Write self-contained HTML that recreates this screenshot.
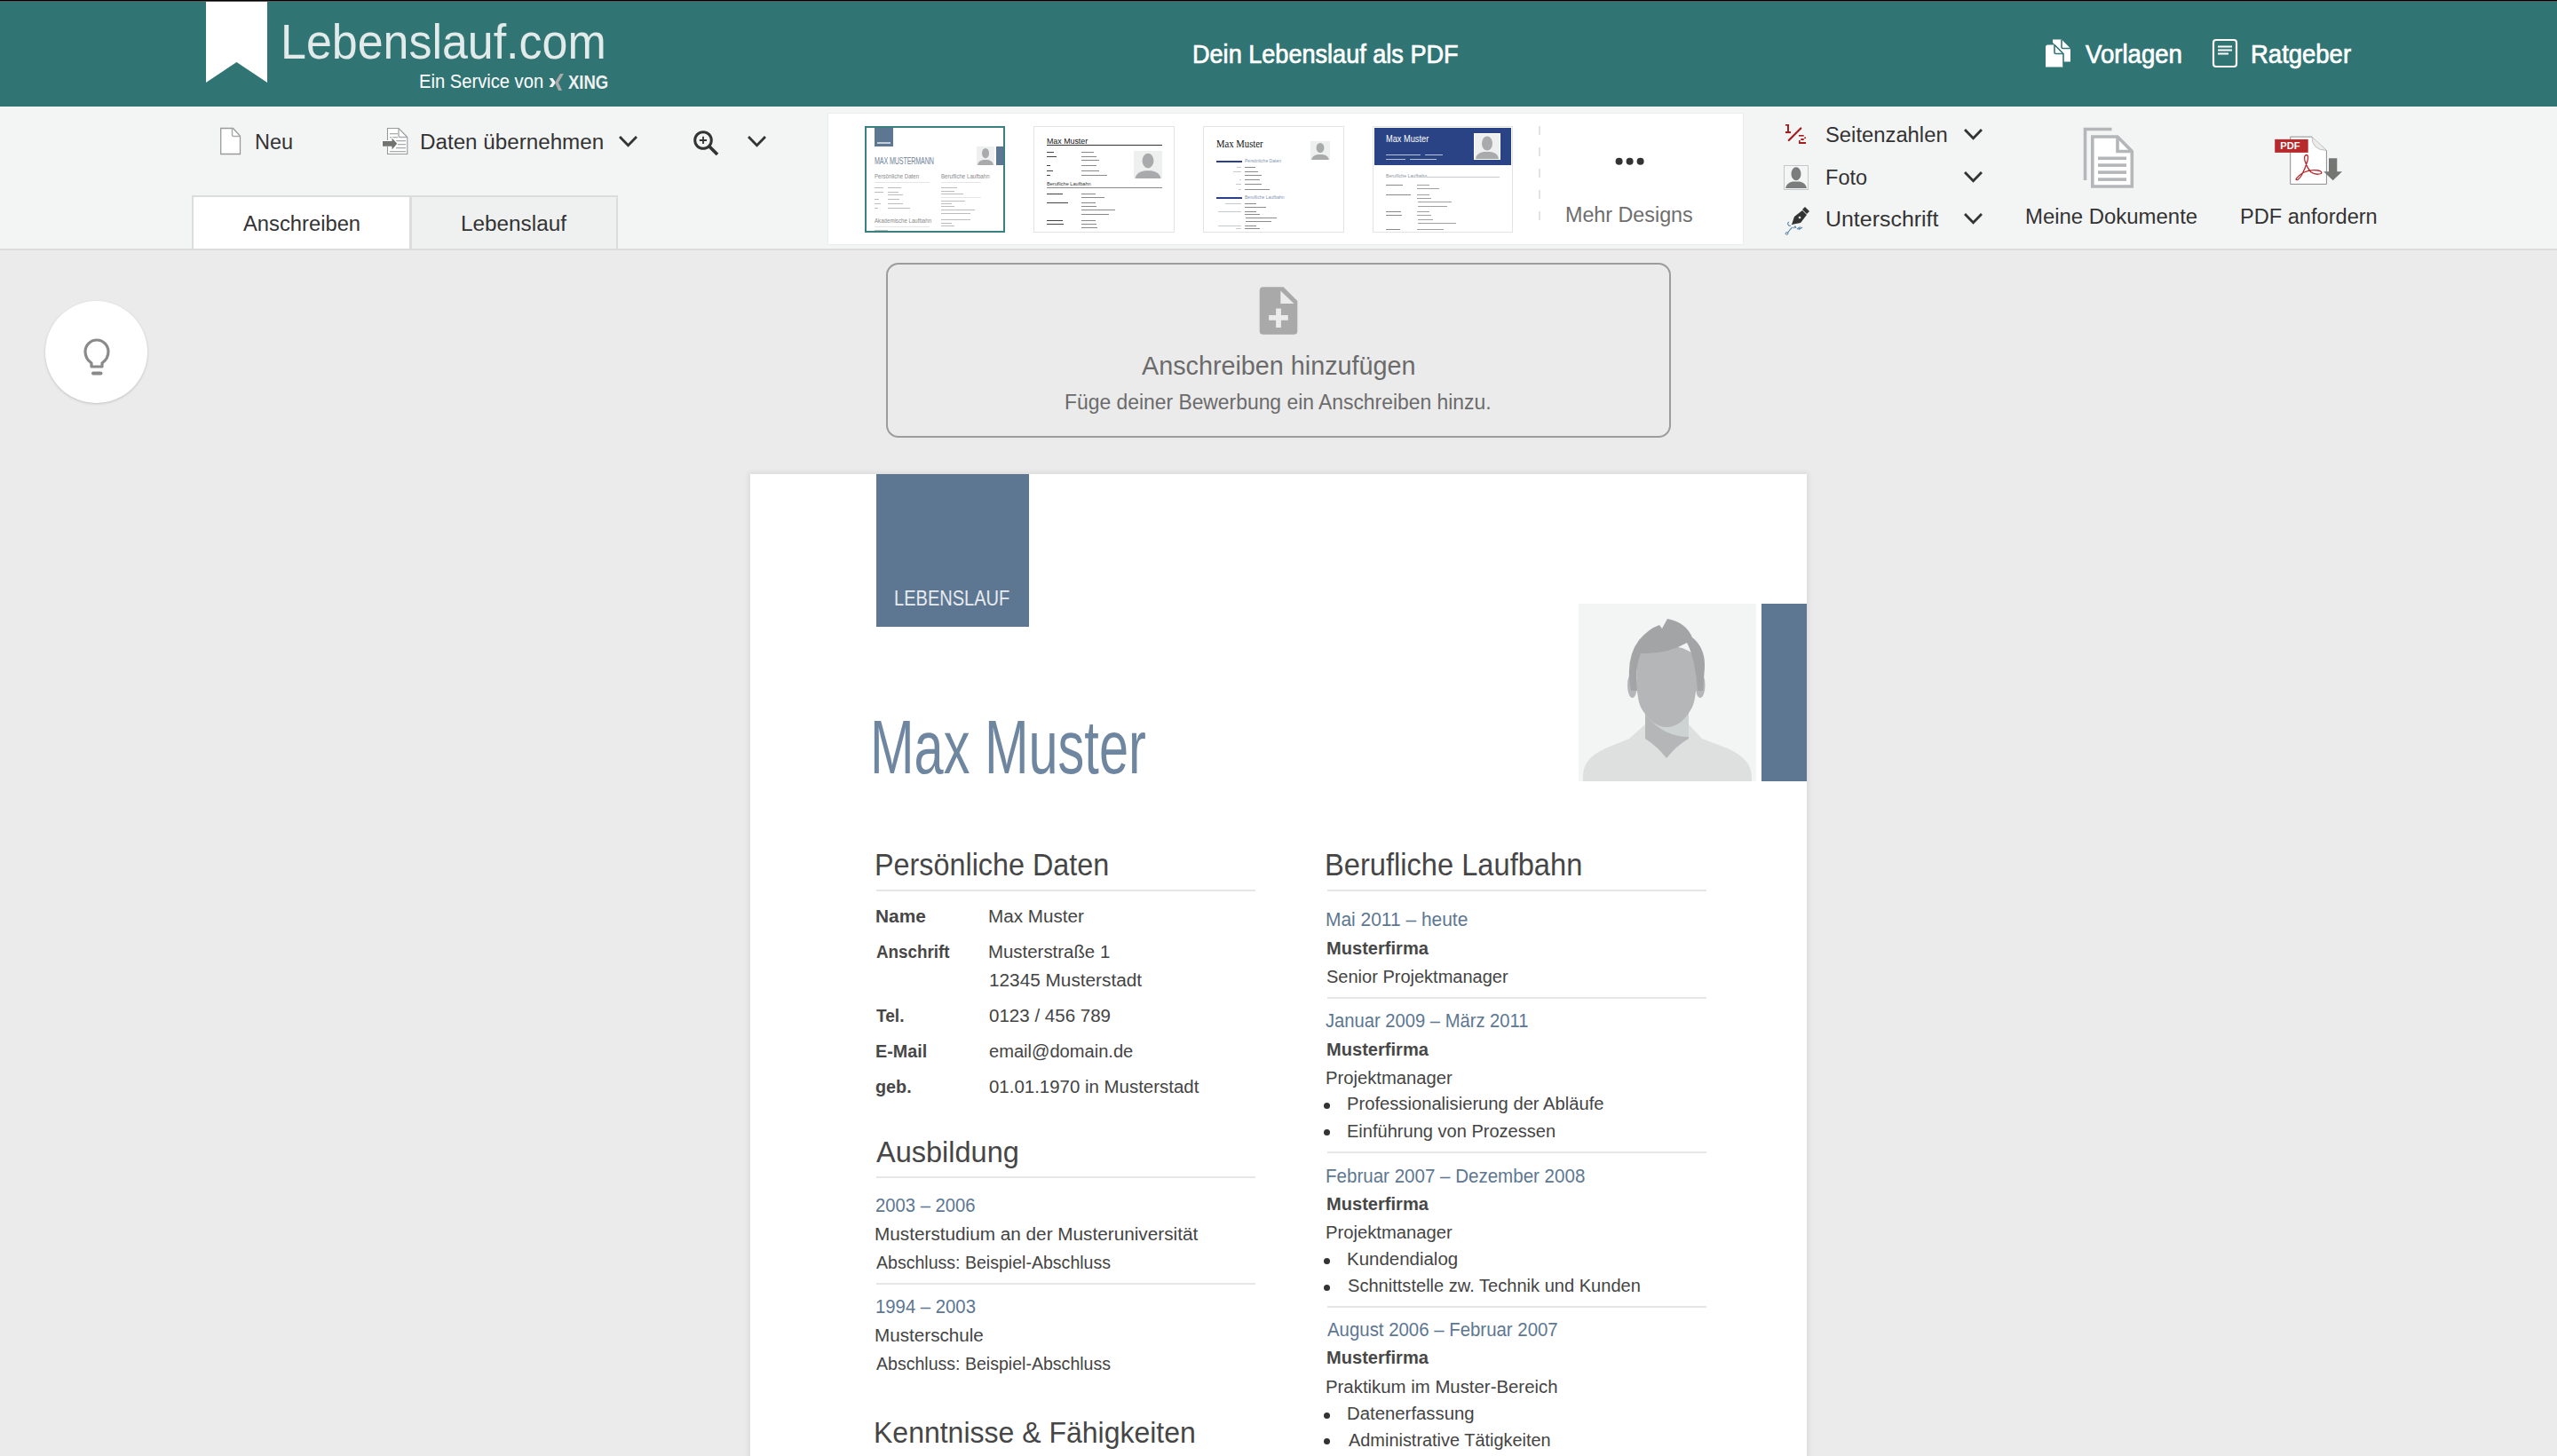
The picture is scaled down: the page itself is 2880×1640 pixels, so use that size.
<!DOCTYPE html>
<html><head><meta charset="utf-8"><style>
html,body{margin:0;padding:0;width:2880px;height:1640px;overflow:hidden;background:#ebebeb;}
.r{position:absolute;display:block;}
.t{position:absolute;white-space:nowrap;line-height:1;transform-origin:0 0;font-family:"Liberation Sans",sans-serif;}
</style></head><body>
<div class="r" style="left:0px;top:0px;width:2880px;height:1640px;background:#ebebeb;"></div>
<div class="r" style="left:0px;top:0px;width:2880px;height:120px;background:#317474;"></div>
<div class="r" style="left:0px;top:0px;width:2880px;height:1px;background:#000;"></div>
<div class="r" style="left:0px;top:1px;width:2880px;height:1px;background:#5a5a58;"></div>
<svg class="r" style="left:232px;top:2px;" width="69" height="91" viewBox="0 0 69 91"><polygon points="0,0 69,0 69,91 34.5,68 0,91" fill="#fff"/></svg>
<svg class="r" style="left:616px;top:82px;" width="22" height="22" viewBox="0 0 22 22"><path d="M2.5,6 L6.5,6 L10,11 L6.5,16 L2.5,16 L6,11 Z" fill="#f2f2f2"/><path d="M15,1 L19,1 L13,11 L17,20 L13,20 L9,11 Z" fill="#a9a9a9"/></svg>
<svg class="r" style="left:2302px;top:42px;" width="32" height="36" viewBox="0 0 32 36"><path d="M10,2.5 L20,2.5 L30,12.5 L30,27.5 L20,27.5 L20,16 L10,6 Z" fill="#fff"/><path d="M20,2.5 L20,11 Q20,12.5 21.5,12.5 L30,12.5" fill="none" stroke="#317474" stroke-width="1.6"/><path d="M2,11 Q2,8.5 4.5,8.5 L12,8.5 L22,18.5 L22,33.5 L2,33.5 Z" fill="#fff"/><path d="M12,8.5 L12,17 Q12,18.5 13.5,18.5 L22,18.5" fill="none" stroke="#317474" stroke-width="1.6"/><path d="M12,8.5 L22,18.5 L22,33.5" fill="none" stroke="#317474" stroke-width="1.6"/></svg>
<svg class="r" style="left:2490px;top:42px;" width="32" height="36" viewBox="0 0 32 36"><rect x="3" y="3" width="26" height="30" rx="3" ry="3" fill="none" stroke="#fff" stroke-width="2.2"/><rect x="8" y="9.5" width="16" height="2" fill="#fff"/><rect x="8" y="13.5" width="16" height="2" fill="#fff"/><rect x="8" y="17.5" width="12" height="2" fill="#fff"/></svg>
<div class="r" style="left:0px;top:120px;width:2880px;height:160px;background:#f3f5f5;"></div>
<div class="r" style="left:0px;top:280px;width:2880px;height:2px;background:#dcdcdc;"></div>
<div class="r" style="left:216px;top:220px;width:247px;height:60px;background:#ffffff;border:2px solid #dcdcdc;border-bottom:none;box-sizing:border-box;"></div>
<div class="r" style="left:462px;top:220px;width:234px;height:60px;background:#eff0f0;border:2px solid #dcdcdc;border-bottom:none;box-sizing:border-box;"></div>
<svg class="r" style="left:246px;top:142px;" width="28" height="34" viewBox="0 0 28 34"><path d="M2.7,2.5 L16.5,2.5 L24.5,11.2 L24.5,31.5 L2.7,31.5 Z" fill="#fff" stroke="#9a9a9a" stroke-width="1.3"/><path d="M15.5,2.5 L15.5,10 Q15.5,11.5 17,11.5 L24.5,11.5" fill="none" stroke="#a8acae" stroke-width="1.5"/></svg>
<svg class="r" style="left:428px;top:142px;" width="34" height="34" viewBox="0 0 34 34"><path d="M8.5,2.5 L21,2.5 L30.8,12.5 L30.8,31.5 L8.5,31.5 Z" fill="#fff" stroke="#999" stroke-width="1.1"/><path d="M21,2.5 L21,11 Q21,12.5 22.5,12.5 L30.8,12.5" fill="none" stroke="#a8acae" stroke-width="1.4"/><g fill="#a9acae"><rect x="11" y="8" width="9" height="1.3"/><rect x="11" y="12" width="9" height="1.3"/><rect x="18" y="16" width="11" height="1.3"/><rect x="20" y="20" width="9" height="1.3"/><rect x="18" y="24" width="11" height="1.3"/><rect x="11" y="28" width="18" height="1.3"/></g><path d="M1,16 L13,16 L13,11.5 L21,19.5 L13,27.5 L13,23 L1,23 Z" fill="#fff"/><path d="M3,17 L13.5,17 L13.5,13.4 L19.3,19.8 L13.5,26.5 L13.5,22.7 L3,22.7 Z" fill="#727472"/></svg>
<svg class="r" style="left:696.0px;top:151.5px;" width="23" height="14.8" viewBox="0 0 23 14.8"><polyline points="3,3 11.5,11.8 20,3" fill="none" stroke="#333" stroke-width="2.8" stroke-linecap="square" stroke-linejoin="miter"/></svg>
<svg class="r" style="left:776px;top:140px;" width="40" height="40" viewBox="0 0 40 40"><circle cx="16" cy="18" r="9.3" fill="none" stroke="#333" stroke-width="3"/><path d="M16,13.8 L16,22 M11.8,18 L20,18" stroke="#333" stroke-width="1.8"/><path d="M23,25 L32,34" stroke="#333" stroke-width="3.8"/></svg>
<svg class="r" style="left:840.5px;top:152px;" width="23" height="14.8" viewBox="0 0 23 14.8"><polyline points="3,3 11.5,11.8 20,3" fill="none" stroke="#333" stroke-width="2.8" stroke-linecap="square" stroke-linejoin="miter"/></svg>
<div class="r" style="left:933px;top:128px;width:1030px;height:147px;background:#ffffff;box-shadow:0 0 0 1px #eceeee;"></div>
<div class="r" style="left:974px;top:142px;width:158px;height:120px;background:#fff;border:2px solid #3b8080;box-sizing:border-box;"></div>
<div class="r" style="left:985px;top:144px;width:21px;height:21px;background:#5d7792;"></div>
<div class="r" style="left:988px;top:160px;width:15px;height:1.5px;background:#c5cfdb;"></div>
<div class="t" style="left:985px;top:176px;font-size:11.5px;color:#6f8399;transform:scaleX(0.62);letter-spacing:-0.2px">MAX MUSTERMANN</div>
<svg class="r" style="left:1100px;top:165px;" width="20" height="21" viewBox="0 0 20 21"><rect width="20" height="21" fill="#eef0f0"/><ellipse cx="10.0" cy="7.56" rx="4.0" ry="5.67" fill="#a9aaab"/><path d="M1.0,21 Q1.6,16.38 7.6,15.12 L12.4,15.12 Q18.400000000000002,16.38 19.0,21 Z" fill="#a9aaab"/></svg>
<div class="r" style="left:1122px;top:165px;width:8px;height:21px;background:#5d7792;"></div>
<div class="t" style="left:985px;top:195.5px;font-size:6.6px;color:#8a8a8a;transform:scaleX(0.93)">Persönliche Daten</div>
<div class="t" style="left:1060px;top:195.5px;font-size:6.6px;color:#8a8a8a;transform:scaleX(0.93)">Berufliche Laufbahn</div>
<div class="t" style="left:985px;top:245.5px;font-size:6.6px;color:#8a8a8a;transform:scaleX(0.93)">Akademische Laufbahn</div>
<div class="r" style="left:985px;top:205px;width:62px;height:1px;background:#e6e6e6;"></div><div class="r" style="left:1060px;top:205px;width:45px;height:1px;background:#e6e6e6;"></div><div class="r" style="left:1060px;top:221.5px;width:45px;height:1.0px;background:#e6e6e6;"></div><div class="r" style="left:985px;top:255px;width:62px;height:1px;background:#e6e6e6;"></div>
<div class="r" style="left:985px;top:211px;width:10px;height:1.3000000000000114px;background:#bdbdbd;"></div><div class="r" style="left:1000px;top:211px;width:15px;height:1.3000000000000114px;background:#bdbdbd;"></div><div class="r" style="left:985px;top:216px;width:10px;height:1.3000000000000114px;background:#bdbdbd;"></div><div class="r" style="left:1000px;top:216px;width:12px;height:1.3000000000000114px;background:#bdbdbd;"></div><div class="r" style="left:1000px;top:219px;width:17px;height:1.3000000000000114px;background:#bdbdbd;"></div><div class="r" style="left:985px;top:224px;width:5px;height:1.3000000000000114px;background:#bdbdbd;"></div><div class="r" style="left:1000px;top:224px;width:13px;height:1.3000000000000114px;background:#bdbdbd;"></div><div class="r" style="left:985px;top:229px;width:7px;height:1.3000000000000114px;background:#bdbdbd;"></div><div class="r" style="left:1000px;top:229px;width:17px;height:1.3000000000000114px;background:#bdbdbd;"></div><div class="r" style="left:985px;top:234px;width:4px;height:1.3000000000000114px;background:#bdbdbd;"></div><div class="r" style="left:1000px;top:234px;width:25px;height:1.3000000000000114px;background:#bdbdbd;"></div><div class="r" style="left:1060px;top:211px;width:18px;height:1.3000000000000114px;background:#bdbdbd;"></div><div class="r" style="left:1060px;top:214.5px;width:15px;height:1.3000000000000114px;background:#bdbdbd;"></div><div class="r" style="left:1060px;top:218px;width:25px;height:1.3000000000000114px;background:#bdbdbd;"></div><div class="r" style="left:1060px;top:226px;width:27px;height:1.3000000000000114px;background:#bdbdbd;"></div><div class="r" style="left:1060px;top:229px;width:12px;height:1.3000000000000114px;background:#bdbdbd;"></div><div class="r" style="left:1060px;top:232px;width:15px;height:1.3000000000000114px;background:#bdbdbd;"></div><div class="r" style="left:1060px;top:236px;width:38px;height:1.3000000000000114px;background:#bdbdbd;"></div><div class="r" style="left:1060px;top:239.5px;width:33px;height:1.3000000000000114px;background:#bdbdbd;"></div><div class="r" style="left:1060px;top:247px;width:33px;height:1.3000000000000114px;background:#bdbdbd;"></div><div class="r" style="left:1060px;top:250.5px;width:12px;height:1.3000000000000114px;background:#bdbdbd;"></div><div class="r" style="left:1060px;top:254px;width:15px;height:1.3000000000000114px;background:#bdbdbd;"></div><div class="r" style="left:985px;top:259px;width:15px;height:1.3000000000000114px;background:#bdbdbd;"></div>
<div class="r" style="left:1164px;top:142px;width:159px;height:120px;background:#fff;border:1.5px solid #e2e4e4;box-sizing:border-box;"></div>
<div class="t" style="left:1178.5px;top:153.5px;font-size:9.6px;font-weight:400;color:#111;transform:scaleX(0.92)">Max Muster</div>
<div class="r" style="left:1179px;top:163.2px;width:130px;height:1.200000000000017px;background:#333;"></div>
<svg class="r" style="left:1277px;top:170px;" width="32" height="31" viewBox="0 0 32 31"><rect width="32" height="31" fill="#eef0f0"/><ellipse cx="16.0" cy="11.16" rx="6.4" ry="8.370000000000001" fill="#a9aaab"/><path d="M1.6,31 Q2.56,24.18 12.16,22.32 L19.84,22.32 Q29.44,24.18 30.4,31 Z" fill="#a9aaab"/></svg>
<div class="r" style="left:1179px;top:171px;width:8px;height:1.3000000000000114px;background:#444;"></div><div class="r" style="left:1179px;top:176px;width:11px;height:1.3000000000000114px;background:#444;"></div><div class="r" style="left:1179px;top:186px;width:4px;height:1.3000000000000114px;background:#444;"></div><div class="r" style="left:1179px;top:191.5px;width:7px;height:1.3000000000000114px;background:#444;"></div><div class="r" style="left:1179px;top:197px;width:4px;height:1.3000000000000114px;background:#444;"></div><div class="r" style="left:1179px;top:217.5px;width:18px;height:1.3000000000000114px;background:#444;"></div><div class="r" style="left:1179px;top:227.5px;width:24px;height:1.3000000000000114px;background:#444;"></div><div class="r" style="left:1179px;top:247.5px;width:18px;height:1.3000000000000114px;background:#444;"></div><div class="r" style="left:1179px;top:251.5px;width:19px;height:1.3000000000000114px;background:#444;"></div>
<div class="r" style="left:1218px;top:171px;width:14px;height:1.3000000000000114px;background:#8a8a8a;"></div><div class="r" style="left:1218px;top:176px;width:17px;height:1.3000000000000114px;background:#8a8a8a;"></div><div class="r" style="left:1218px;top:180px;width:20px;height:1.3000000000000114px;background:#8a8a8a;"></div><div class="r" style="left:1218px;top:186px;width:17px;height:1.3000000000000114px;background:#8a8a8a;"></div><div class="r" style="left:1218px;top:191.5px;width:20px;height:1.3000000000000114px;background:#8a8a8a;"></div><div class="r" style="left:1218px;top:197px;width:29px;height:1.3000000000000114px;background:#8a8a8a;"></div><div class="r" style="left:1218px;top:217.5px;width:16px;height:1.3000000000000114px;background:#8a8a8a;"></div><div class="r" style="left:1218px;top:221.5px;width:26px;height:1.3000000000000114px;background:#8a8a8a;"></div><div class="r" style="left:1218px;top:227.5px;width:16px;height:1.3000000000000114px;background:#8a8a8a;"></div><div class="r" style="left:1218px;top:231.5px;width:17px;height:1.3000000000000114px;background:#8a8a8a;"></div><div class="r" style="left:1218px;top:236px;width:38px;height:1.3000000000000114px;background:#8a8a8a;"></div><div class="r" style="left:1218px;top:240.5px;width:31px;height:1.3000000000000114px;background:#8a8a8a;"></div><div class="r" style="left:1218px;top:247.5px;width:16px;height:1.3000000000000114px;background:#8a8a8a;"></div><div class="r" style="left:1218px;top:251.5px;width:17px;height:1.3000000000000114px;background:#8a8a8a;"></div><div class="r" style="left:1218px;top:256px;width:18px;height:1.3000000000000114px;background:#8a8a8a;"></div>
<div class="t" style="left:1179px;top:204px;font-size:6px;color:#333;transform:scaleX(0.93)">Berufliche Laufbahn</div>
<div class="r" style="left:1179px;top:210.5px;width:130px;height:1.0px;background:#888;"></div>
<div class="r" style="left:1355px;top:142px;width:159px;height:120px;background:#fff;border:1.5px solid #e2e4e4;box-sizing:border-box;"></div>
<div class="t" style="left:1369.5px;top:157px;font-family:'Liberation Serif';font-size:11.5px;font-weight:400;color:#111;transform:scaleX(0.93)">Max Muster</div>
<svg class="r" style="left:1476px;top:159px;" width="22" height="21" viewBox="0 0 22 21"><rect width="22" height="21" fill="#eef0f0"/><ellipse cx="11.0" cy="7.56" rx="4.4" ry="5.67" fill="#a9aaab"/><path d="M1.1,21 Q1.76,16.38 8.36,15.12 L13.64,15.12 Q20.240000000000002,16.38 20.9,21 Z" fill="#a9aaab"/></svg>
<div class="r" style="left:1370px;top:181px;width:29px;height:1.5px;background:#2b408a;"></div>
<div class="r" style="left:1370px;top:222px;width:29px;height:1.5px;background:#2b408a;"></div>
<div class="t" style="left:1402px;top:178.5px;font-size:5.4px;color:#7f95b3;transform:scaleX(0.93)">Persönliche Daten</div>
<div class="t" style="left:1402px;top:219.5px;font-size:5.4px;color:#7f95b3;transform:scaleX(0.93)">Berufliche Laufbahn</div>
<div class="r" style="left:1393px;top:188px;width:5px;height:1.0999999999999943px;background:#c3cad4;"></div><div class="r" style="left:1389px;top:193px;width:9px;height:1.0999999999999943px;background:#c3cad4;"></div><div class="r" style="left:1396px;top:202px;width:2px;height:1.0999999999999943px;background:#c3cad4;"></div><div class="r" style="left:1392px;top:207px;width:6px;height:1.0999999999999943px;background:#c3cad4;"></div><div class="r" style="left:1395px;top:212.5px;width:3px;height:1.0999999999999943px;background:#c3cad4;"></div><div class="r" style="left:1380px;top:229px;width:18px;height:1.0999999999999943px;background:#c3cad4;"></div><div class="r" style="left:1372px;top:237.5px;width:26px;height:1.0999999999999943px;background:#c3cad4;"></div><div class="r" style="left:1372px;top:253.5px;width:26px;height:1.0999999999999943px;background:#c3cad4;"></div><div class="r" style="left:1392px;top:257px;width:6px;height:1.1000000000000227px;background:#c3cad4;"></div>
<div class="r" style="left:1402px;top:188px;width:12px;height:1.1999999999999886px;background:#8c8c8c;"></div><div class="r" style="left:1402px;top:193px;width:15px;height:1.1999999999999886px;background:#8c8c8c;"></div><div class="r" style="left:1402px;top:196.5px;width:19px;height:1.1999999999999886px;background:#8c8c8c;"></div><div class="r" style="left:1402px;top:202px;width:17px;height:1.1999999999999886px;background:#8c8c8c;"></div><div class="r" style="left:1402px;top:207px;width:19px;height:1.1999999999999886px;background:#8c8c8c;"></div><div class="r" style="left:1402px;top:212.5px;width:28px;height:1.1999999999999886px;background:#8c8c8c;"></div><div class="r" style="left:1402px;top:229px;width:13px;height:1.1999999999999886px;background:#8c8c8c;"></div><div class="r" style="left:1402px;top:232.5px;width:24px;height:1.1999999999999886px;background:#8c8c8c;"></div><div class="r" style="left:1402px;top:237.5px;width:13px;height:1.1999999999999886px;background:#8c8c8c;"></div><div class="r" style="left:1402px;top:241px;width:17px;height:1.1999999999999886px;background:#8c8c8c;"></div><div class="r" style="left:1403px;top:245px;width:35px;height:1.1999999999999886px;background:#8c8c8c;"></div><div class="r" style="left:1403px;top:248.5px;width:29px;height:1.1999999999999886px;background:#8c8c8c;"></div><div class="r" style="left:1402px;top:253.5px;width:13px;height:1.1999999999999886px;background:#8c8c8c;"></div><div class="r" style="left:1402px;top:257px;width:17px;height:1.1999999999999886px;background:#8c8c8c;"></div>
<div class="r" style="left:1546px;top:142px;width:158px;height:120px;background:#fff;border:1.5px solid #e2e4e4;box-sizing:border-box;"></div>
<div class="r" style="left:1548px;top:144px;width:154px;height:42px;background:#2a4384;"></div>
<div class="t" style="left:1561px;top:150.5px;font-size:10.5px;color:#fff;transform:scaleX(0.88)">Max Muster</div>
<svg class="r" style="left:1660px;top:150px;" width="30" height="30" viewBox="0 0 30 30"><rect x="0.5" y="0.5" width="29" height="29" fill="#eef0f0" stroke="#fff" stroke-width="1"/><ellipse cx="15" cy="11.5" rx="6" ry="8" fill="#a9aaab"/><path d="M2,29 Q3,22 11,21 L19,21 Q27,22 28,29 Z" fill="#a9aaab"/></svg>
<div class="r" style="left:1561px;top:173.5px;width:39px;height:1.3000000000000114px;background:#b7c2d8;"></div><div class="r" style="left:1605px;top:173.5px;width:20px;height:1.3000000000000114px;background:#b7c2d8;"></div><div class="r" style="left:1561px;top:178.5px;width:22px;height:1.3000000000000114px;background:#b7c2d8;"></div><div class="r" style="left:1588px;top:178.5px;width:30px;height:1.3000000000000114px;background:#b7c2d8;"></div>
<div class="t" style="left:1561px;top:195.5px;font-size:5.6px;color:#8b949c;transform:scaleX(0.93)">Berufliche Laufbahn</div>
<div class="r" style="left:1598px;top:198.5px;width:91px;height:1.0px;background:#c8ccd0;"></div>
<div class="r" style="left:1561px;top:208px;width:19px;height:1.1999999999999886px;background:#8a8a8a;"></div><div class="r" style="left:1561px;top:218.5px;width:28px;height:1.1999999999999886px;background:#8a8a8a;"></div><div class="r" style="left:1561px;top:238px;width:17px;height:1.1999999999999886px;background:#8a8a8a;"></div><div class="r" style="left:1561px;top:242px;width:18px;height:1.1999999999999886px;background:#8a8a8a;"></div><div class="r" style="left:1561px;top:258px;width:16px;height:1.1999999999999886px;background:#8a8a8a;"></div>
<div class="r" style="left:1596px;top:208px;width:14px;height:1.1999999999999886px;background:#a0a0a0;"></div><div class="r" style="left:1596px;top:212px;width:25px;height:1.1999999999999886px;background:#a0a0a0;"></div><div class="r" style="left:1596px;top:218.5px;width:14px;height:1.1999999999999886px;background:#a0a0a0;"></div><div class="r" style="left:1596px;top:222.5px;width:16px;height:1.1999999999999886px;background:#a0a0a0;"></div><div class="r" style="left:1597px;top:227px;width:38px;height:1.1999999999999886px;background:#a0a0a0;"></div><div class="r" style="left:1597px;top:231.5px;width:33px;height:1.1999999999999886px;background:#a0a0a0;"></div><div class="r" style="left:1596px;top:238px;width:14px;height:1.1999999999999886px;background:#a0a0a0;"></div><div class="r" style="left:1596px;top:242px;width:16px;height:1.1999999999999886px;background:#a0a0a0;"></div><div class="r" style="left:1597px;top:246.5px;width:17px;height:1.1999999999999886px;background:#a0a0a0;"></div><div class="r" style="left:1597px;top:251px;width:43px;height:1.1999999999999886px;background:#a0a0a0;"></div><div class="r" style="left:1596px;top:258px;width:30px;height:1.1999999999999886px;background:#a0a0a0;"></div>
<div class="r" style="left:1732.5px;top:142px;width:2.5px;height:120px;background:repeating-linear-gradient(to bottom,#e3e3e3 0,#e3e3e3 10px,transparent 10px,transparent 24px);"></div>
<svg class="r" style="left:1815px;top:174px;" width="42" height="16" viewBox="0 0 42 16"><circle cx="8.6" cy="7.8" r="4" fill="#333"/><circle cx="20.6" cy="7.8" r="4" fill="#333"/><circle cx="32.6" cy="7.8" r="4" fill="#333"/></svg>
<svg class="r" style="left:2008px;top:138px;" width="30" height="28" viewBox="0 0 30 28"><g fill="#a51d1d"><rect x="3" y="2" width="4" height="1.7"/><rect x="5" y="2" width="2" height="10"/><rect x="3" y="10" width="6" height="2.1"/><rect x="18" y="14" width="5.7" height="1.6"/><rect x="24.2" y="16.5" width="1.8" height="1.6"/><rect x="20.3" y="18" width="3.4" height="2"/><rect x="18" y="20" width="1.6" height="4"/><rect x="18" y="22" width="8" height="2"/></g><path d="M6.8,20 L20.3,6.5" stroke="#a51d1d" stroke-width="2.2" stroke-linecap="round"/></svg>
<svg class="r" style="left:2210.5px;top:143.5px;" width="23" height="14.8" viewBox="0 0 23 14.8"><polyline points="3,3 11.5,11.8 20,3" fill="none" stroke="#333" stroke-width="2.8" stroke-linecap="square" stroke-linejoin="miter"/></svg>
<svg class="r" style="left:2009px;top:186px;" width="28" height="28" viewBox="0 0 28 28"><rect x="0.5" y="0.5" width="27" height="27" fill="#f4f5f5" stroke="#c4c8cc" stroke-width="1"/><ellipse cx="14" cy="9.8" rx="5.5" ry="7.5" fill="#7c7c7c"/><path d="M2,26 Q3,20 10,18.5 L18,18.5 Q25,20 26,26 Z" fill="#7c7c7c"/></svg>
<svg class="r" style="left:2210.5px;top:191.5px;" width="23" height="14.8" viewBox="0 0 23 14.8"><polyline points="3,3 11.5,11.8 20,3" fill="none" stroke="#333" stroke-width="2.8" stroke-linecap="square" stroke-linejoin="miter"/></svg>
<svg class="r" style="left:2008px;top:232px;" width="32" height="34" viewBox="0 0 32 34"><path d="M10,21 L13,12 L22,5 L27,10 L20,19 Z" fill="#333"/><path d="M22,4 L25,1 L30,6 L27,9 Z" fill="#333"/><circle cx="19" cy="13" r="1.3" fill="#f3f5f5"/><path d="M10,21 L16,15" stroke="#333" stroke-width="1"/><path d="M7,18 Q5,19 6,21 Q7,23 9,22 M5,31 Q8,26 11,24 M12,25 L14,23 L15,25 M16,26 L19,24 L18,27 M19,26 L22,24" fill="none" stroke="#5a86a8" stroke-width="1.1"/><circle cx="4.5" cy="31" r="1.4" fill="none" stroke="#5a86a8" stroke-width="1"/></svg>
<svg class="r" style="left:2210.5px;top:239px;" width="23" height="14.8" viewBox="0 0 23 14.8"><polyline points="3,3 11.5,11.8 20,3" fill="none" stroke="#333" stroke-width="2.8" stroke-linecap="square" stroke-linejoin="miter"/></svg>
<svg class="r" style="left:2344px;top:141px;" width="62" height="74" viewBox="0 0 62 74"><path d="M4.5,62 L4.5,4.5 L34.5,4.5" fill="none" stroke="#b4b6b8" stroke-width="3.6"/><path d="M12.8,13 L41,13 L57.3,29.5 L57.3,69 L12.8,69 Z" fill="#fff" stroke="#b4b6b8" stroke-width="3.6"/><path d="M41,13 L41,29.5 L57.3,29.5" fill="none" stroke="#b4b6b8" stroke-width="3.6"/><g fill="#b4b6b8"><rect x="19" y="35.5" width="32" height="3.6"/><rect x="19" y="43.3" width="32" height="3.6"/><rect x="19" y="51.3" width="32" height="3.6"/><rect x="19" y="59.3" width="32" height="3.6"/></g></svg>
<svg class="r" style="left:2558px;top:150px;" width="84" height="62" viewBox="0 0 84 62"><path d="M21.7,4.1 L45.9,4.1 L62.4,19.5 L62.4,57.4 L21.7,57.4 Z" fill="#fff" stroke="#8a8a8a" stroke-width="1"/><path d="M45.9,4.1 Q46,19 62.4,19.5" fill="#ececec" stroke="#b0b0b0" stroke-width="0.8"/><rect x="4.2" y="6.9" width="37.5" height="15" fill="#b8292c"/><text x="10.2" y="18.3" font-family="Liberation Sans" font-weight="700" font-size="11.2" fill="#fff">PDF</text><path d="M40,24.5 Q36.5,25 38,31 Q40.5,39 45,44 Q50.5,47.5 56.5,45.5 Q58,43 53,42 Q44,40.5 36,44.5 Q29.5,49 28,52 Q29.5,54.5 34,48 Q38.5,40 41,31 Q42.5,25 40,24.5 Z" fill="none" stroke="#b8292c" stroke-width="1.3"/><path d="M65,28.2 L74.3,28.2 L74.3,43.2 L80,43.2 L69.6,53.2 L59.2,43.2 L65,43.2 Z" fill="#747674"/></svg>
<div class="r" style="left:51px;top:339px;width:115px;height:115px;background:#fff;border-radius:50%;box-shadow:0 1px 3px rgba(0,0,0,0.18);"></div>
<svg class="r" style="left:90px;top:378px;" width="38" height="50" viewBox="0 0 38 50"><path d="M13,35 L13,31 Q6,26 6,18 A13,13 0 0 1 32,18 Q32,26 25,31 L25,35 Z" fill="none" stroke="#8a8a8a" stroke-width="3.2" stroke-linejoin="round"/><path d="M15,42.6 L23.5,42.6" stroke="#8a8a8a" stroke-width="4" stroke-linecap="round"/></svg>
<div class="r" style="left:998px;top:296px;width:884px;height:197px;background:transparent;border:2px solid #9c9c9c;border-radius:14px;box-sizing:border-box;"></div>
<svg class="r" style="left:1418px;top:323px;" width="44" height="54" viewBox="0 0 44 54"><path d="M4.7,0.2 L27.6,0.2 L43.3,16.1 L43.3,49.8 Q43.3,53.8 39.3,53.8 L4.7,53.8 Q0.7,53.8 0.7,49.8 L0.7,4.2 Q0.7,0.2 4.7,0.2 Z" fill="#a9a9a9"/><path d="M24.3,4.6 L39.4,18.9 L24.3,18.9 Z" fill="#ebebeb"/><path d="M22,24.4 L22,46 M11.1,34.9 L32.8,34.9" stroke="#ebebeb" stroke-width="5.8"/></svg>
<div class="r" style="left:845px;top:534px;width:1190px;height:1166px;background:#fff;box-shadow:0 0 6px 2px rgba(0,0,0,0.07);"></div>
<div class="r" style="left:987px;top:534px;width:172px;height:172px;background:#5d7792;"></div>
<svg class="r" style="left:1778px;top:680px;" width="200" height="200" viewBox="0 0 200 200"><rect width="200" height="200" fill="#f3f5f5"/><path d="M5,200 C4,180 12,172 30,163 L57,152 L75,136 L124,136 L139,152 L168,163 C186,172 196,180 195,200 Z" fill="#dedfdf"/><path d="M75,122 L124,122 L124,152 Q110,160 99,174 Q88,160 75,152 Z" fill="#b5b6b8"/><path d="M76,126 Q96,150 124,150 L124,124 Z" fill="#cdd2d3"/><ellipse cx="60.5" cy="92" rx="5.5" ry="14" fill="#b5b6b8"/><ellipse cx="137" cy="92" rx="5.5" ry="14" fill="#b5b6b8"/><path d="M66,58 Q63,108 72,120 Q84,139 99,139 Q115,139 126,120 Q135,108 132,58 Q100,36 66,58 Z" fill="#b5b6b8"/><path d="M59,98 Q52,62 68,41 Q79,28 91,24 L94,28 L100,17 Q121,21 128,38 Q143,50 142,72 L140,98 L134,98 Q131,60 122,44 Q100,57 70,56 Q63,72 66,98 Z" fill="#a3a4a5"/></svg>
<div class="r" style="left:1984px;top:680px;width:51px;height:200px;background:#5d7792;"></div>
<div class="r" style="left:987px;top:1002px;width:427px;height:2px;background:#e6e6e6;"></div>
<div class="r" style="left:987px;top:1325px;width:427px;height:2px;background:#e6e6e6;"></div>
<div class="r" style="left:987px;top:1445px;width:427px;height:2px;background:#e6e6e6;"></div>
<div class="r" style="left:1495px;top:1002px;width:427px;height:2px;background:#e6e6e6;"></div>
<div class="r" style="left:1495px;top:1123px;width:427px;height:2px;background:#e6e6e6;"></div>
<div class="r" style="left:1495px;top:1297px;width:427px;height:2px;background:#e6e6e6;"></div>
<div class="r" style="left:1495px;top:1471px;width:427px;height:2px;background:#e6e6e6;"></div>
<div class="r" style="left:1490.5px;top:1241.8px;width:7.0px;height:7.0px;background:#333;border-radius:50%;"></div>
<div class="r" style="left:1490.5px;top:1272.2px;width:7.0px;height:7.0px;background:#333;border-radius:50%;"></div>
<div class="r" style="left:1490.5px;top:1416.5px;width:7.0px;height:7.0px;background:#333;border-radius:50%;"></div>
<div class="r" style="left:1490.5px;top:1446.5px;width:7.0px;height:7.0px;background:#333;border-radius:50%;"></div>
<div class="r" style="left:1490.5px;top:1590.5px;width:7.0px;height:7.0px;background:#333;border-radius:50%;"></div>
<div class="r" style="left:1490.5px;top:1620.0px;width:7.0px;height:7.0px;background:#333;border-radius:50%;"></div>
<div class="t" style="left:315.54px;top:19.77px;font-size:55.65px;font-weight:400;color:#e3eaea;transform:scaleX(0.9334);">Lebenslauf.com</div>
<div class="t" style="left:471.79px;top:80.47px;font-size:22.75px;font-weight:400;color:#ffffff;transform:scaleX(0.8865);">Ein Service von</div>
<div class="t" style="left:639.80px;top:82.12px;font-size:22.46px;font-weight:700;color:#f0f0f0;transform:scaleX(0.8243);">XING</div>
<div class="t" style="left:1343.23px;top:46.51px;font-size:28.99px;font-weight:400;color:#ffffff;transform:scaleX(0.9344);-webkit-text-stroke:0.7px #fff;">Dein Lebenslauf als PDF</div>
<div class="t" style="left:2348.60px;top:46.51px;font-size:28.99px;font-weight:400;color:#ffffff;transform:scaleX(0.9521);-webkit-text-stroke:0.7px #fff;">Vorlagen</div>
<div class="t" style="left:2534.70px;top:46.51px;font-size:28.99px;font-weight:400;color:#ffffff;transform:scaleX(0.9481);-webkit-text-stroke:0.7px #fff;">Ratgeber</div>
<div class="t" style="left:287.12px;top:148.28px;font-size:24.64px;font-weight:400;color:#333333;transform:scaleX(0.9544);">Neu</div>
<div class="t" style="left:473.06px;top:148.28px;font-size:24.64px;font-weight:400;color:#333333;transform:scaleX(0.9827);">Daten übernehmen</div>
<div class="t" style="left:274.00px;top:239.78px;font-size:24.64px;font-weight:400;color:#333333;transform:scaleX(0.9647);">Anschreiben</div>
<div class="t" style="left:519.35px;top:239.78px;font-size:24.64px;font-weight:400;color:#333333;transform:scaleX(0.9871);">Lebenslauf</div>
<div class="t" style="left:1762.94px;top:229.78px;font-size:24.64px;font-weight:400;color:#6e6e6e;transform:scaleX(0.9459);">Mehr Designs</div>
<div class="t" style="left:2056.05px;top:139.78px;font-size:24.64px;font-weight:400;color:#333333;transform:scaleX(0.9665);">Seitenzahlen</div>
<div class="t" style="left:2055.72px;top:187.68px;font-size:24.64px;font-weight:400;color:#333333;transform:scaleX(0.9561);">Foto</div>
<div class="t" style="left:2055.85px;top:235.18px;font-size:24.64px;font-weight:400;color:#333333;transform:scaleX(1.0122);">Unterschrift</div>
<div class="t" style="left:2281.09px;top:231.98px;font-size:24.64px;font-weight:400;color:#333333;transform:scaleX(0.9712);">Meine Dokumente</div>
<div class="t" style="left:2522.51px;top:231.78px;font-size:24.64px;font-weight:400;color:#333333;transform:scaleX(0.9581);">PDF anfordern</div>
<div class="t" style="left:1285.90px;top:397.51px;font-size:28.99px;font-weight:400;color:#6b6b6b;transform:scaleX(0.9920);">Anschreiben hinzufügen</div>
<div class="t" style="left:1198.77px;top:441.48px;font-size:24.64px;font-weight:400;color:#6b6b6b;transform:scaleX(0.9286);">Füge deiner Bewerbung ein Anschreiben hinzu.</div>
<div class="t" style="left:1007.00px;top:663.31px;font-size:23.19px;font-weight:400;color:#e7ebef;transform:scaleX(0.8643);">LEBENSLAUF</div>
<div class="t" style="left:979.94px;top:798.75px;font-size:85.51px;font-weight:400;color:#6f86a0;transform:scaleX(0.6960);">Max Muster</div>
<div class="t" style="left:984.91px;top:957.41px;font-size:34.78px;font-weight:400;color:#464646;transform:scaleX(0.9303);">Persönliche Daten</div>
<div class="t" style="left:1492.39px;top:957.41px;font-size:34.78px;font-weight:400;color:#464646;transform:scaleX(0.9387);">Berufliche Laufbahn</div>
<div class="t" style="left:987.00px;top:1281.43px;font-size:33.33px;font-weight:400;color:#464646;transform:scaleX(0.9750);">Ausbildung</div>
<div class="t" style="left:984.44px;top:1597.43px;font-size:33.33px;font-weight:400;color:#464646;transform:scaleX(0.9599);">Kenntnisse &amp; Fähigkeiten</div>
<div class="t" style="left:985.75px;top:1021.99px;font-size:20.72px;font-weight:700;color:#474747;transform:scaleX(1.0062);">Name</div>
<div class="t" style="left:1113.35px;top:1021.99px;font-size:20.72px;font-weight:400;color:#444444;transform:scaleX(0.9960);">Max Muster</div>
<div class="t" style="left:986.62px;top:1061.99px;font-size:20.72px;font-weight:700;color:#474747;transform:scaleX(0.9084);">Anschrift</div>
<div class="t" style="left:1113.37px;top:1061.99px;font-size:20.72px;font-weight:400;color:#444444;transform:scaleX(0.9851);">Musterstraße 1</div>
<div class="t" style="left:1113.55px;top:1093.89px;font-size:20.72px;font-weight:400;color:#444444;transform:scaleX(1.0026);">12345 Musterstadt</div>
<div class="t" style="left:986.81px;top:1134.09px;font-size:20.72px;font-weight:700;color:#474747;transform:scaleX(0.9217);">Tel.</div>
<div class="t" style="left:1114.38px;top:1134.09px;font-size:20.72px;font-weight:400;color:#444444;transform:scaleX(0.9911);">0123 / 456 789</div>
<div class="t" style="left:985.82px;top:1173.59px;font-size:20.72px;font-weight:700;color:#474747;transform:scaleX(0.9524);">E-Mail</div>
<div class="t" style="left:1114.20px;top:1173.59px;font-size:20.72px;font-weight:400;color:#444444;transform:scaleX(0.9700);">email@domain.de</div>
<div class="t" style="left:986.21px;top:1213.89px;font-size:20.72px;font-weight:700;color:#474747;transform:scaleX(0.9537);">geb.</div>
<div class="t" style="left:1114.39px;top:1213.89px;font-size:20.72px;font-weight:400;color:#444444;transform:scaleX(0.9864);">01.01.1970 in Musterstadt</div>
<div class="t" style="left:985.99px;top:1347.23px;font-size:21.74px;font-weight:400;color:#5d7792;transform:scaleX(0.9309);">2003 – 2006</div>
<div class="t" style="left:985.34px;top:1380.09px;font-size:20.72px;font-weight:400;color:#444444;transform:scaleX(1.0009);">Musterstudium an der Musteruniversität</div>
<div class="t" style="left:987.00px;top:1412.09px;font-size:20.72px;font-weight:400;color:#444444;transform:scaleX(0.9435);">Abschluss: Beispiel-Abschluss</div>
<div class="t" style="left:985.58px;top:1460.93px;font-size:21.74px;font-weight:400;color:#5d7792;transform:scaleX(0.9344);">1994 – 2003</div>
<div class="t" style="left:985.35px;top:1494.09px;font-size:20.72px;font-weight:400;color:#444444;transform:scaleX(0.9972);">Musterschule</div>
<div class="t" style="left:987.00px;top:1526.29px;font-size:20.72px;font-weight:400;color:#444444;transform:scaleX(0.9435);">Abschluss: Beispiel-Abschluss</div>
<div class="t" style="left:1493.32px;top:1024.83px;font-size:21.74px;font-weight:400;color:#5d7792;transform:scaleX(0.9636);">Mai 2011 – heute</div>
<div class="t" style="left:1493.80px;top:1057.89px;font-size:20.72px;font-weight:700;color:#474747;transform:scaleX(0.9689);">Musterfirma</div>
<div class="t" style="left:1494.20px;top:1090.09px;font-size:20.72px;font-weight:400;color:#444444;transform:scaleX(0.9656);">Senior Projektmanager</div>
<div class="t" style="left:1493.30px;top:1139.13px;font-size:21.74px;font-weight:400;color:#5d7792;transform:scaleX(0.9285);">Januar 2009 – März 2011</div>
<div class="t" style="left:1493.80px;top:1171.59px;font-size:20.72px;font-weight:700;color:#474747;transform:scaleX(0.9689);">Musterfirma</div>
<div class="t" style="left:1493.38px;top:1204.29px;font-size:20.72px;font-weight:400;color:#444444;transform:scaleX(0.9767);">Projektmanager</div>
<div class="t" style="left:1516.98px;top:1233.39px;font-size:20.72px;font-weight:400;color:#444444;transform:scaleX(0.9744);">Professionalisierung der Abläufe</div>
<div class="t" style="left:1517.00px;top:1263.79px;font-size:20.72px;font-weight:400;color:#444444;transform:scaleX(0.9673);">Einführung von Prozessen</div>
<div class="t" style="left:1493.36px;top:1313.53px;font-size:21.74px;font-weight:400;color:#5d7792;transform:scaleX(0.9451);">Februar 2007 – Dezember 2008</div>
<div class="t" style="left:1493.80px;top:1345.69px;font-size:20.72px;font-weight:700;color:#474747;transform:scaleX(0.9689);">Musterfirma</div>
<div class="t" style="left:1493.38px;top:1378.09px;font-size:20.72px;font-weight:400;color:#444444;transform:scaleX(0.9767);">Projektmanager</div>
<div class="t" style="left:1516.96px;top:1408.09px;font-size:20.72px;font-weight:400;color:#444444;transform:scaleX(0.9875);">Kundendialog</div>
<div class="t" style="left:1517.80px;top:1438.09px;font-size:20.72px;font-weight:400;color:#444444;transform:scaleX(0.9687);">Schnittstelle zw. Technik und Kunden</div>
<div class="t" style="left:1495.00px;top:1486.93px;font-size:21.74px;font-weight:400;color:#5d7792;transform:scaleX(0.9385);">August 2006 – Februar 2007</div>
<div class="t" style="left:1493.80px;top:1519.49px;font-size:20.72px;font-weight:700;color:#474747;transform:scaleX(0.9689);">Musterfirma</div>
<div class="t" style="left:1493.37px;top:1551.89px;font-size:20.72px;font-weight:400;color:#444444;transform:scaleX(0.9833);">Praktikum im Muster-Bereich</div>
<div class="t" style="left:1516.97px;top:1582.09px;font-size:20.72px;font-weight:400;color:#444444;transform:scaleX(0.9819);">Datenerfassung</div>
<div class="t" style="left:1518.60px;top:1611.59px;font-size:20.72px;font-weight:400;color:#444444;transform:scaleX(0.9614);">Administrative Tätigkeiten</div>
</body></html>
